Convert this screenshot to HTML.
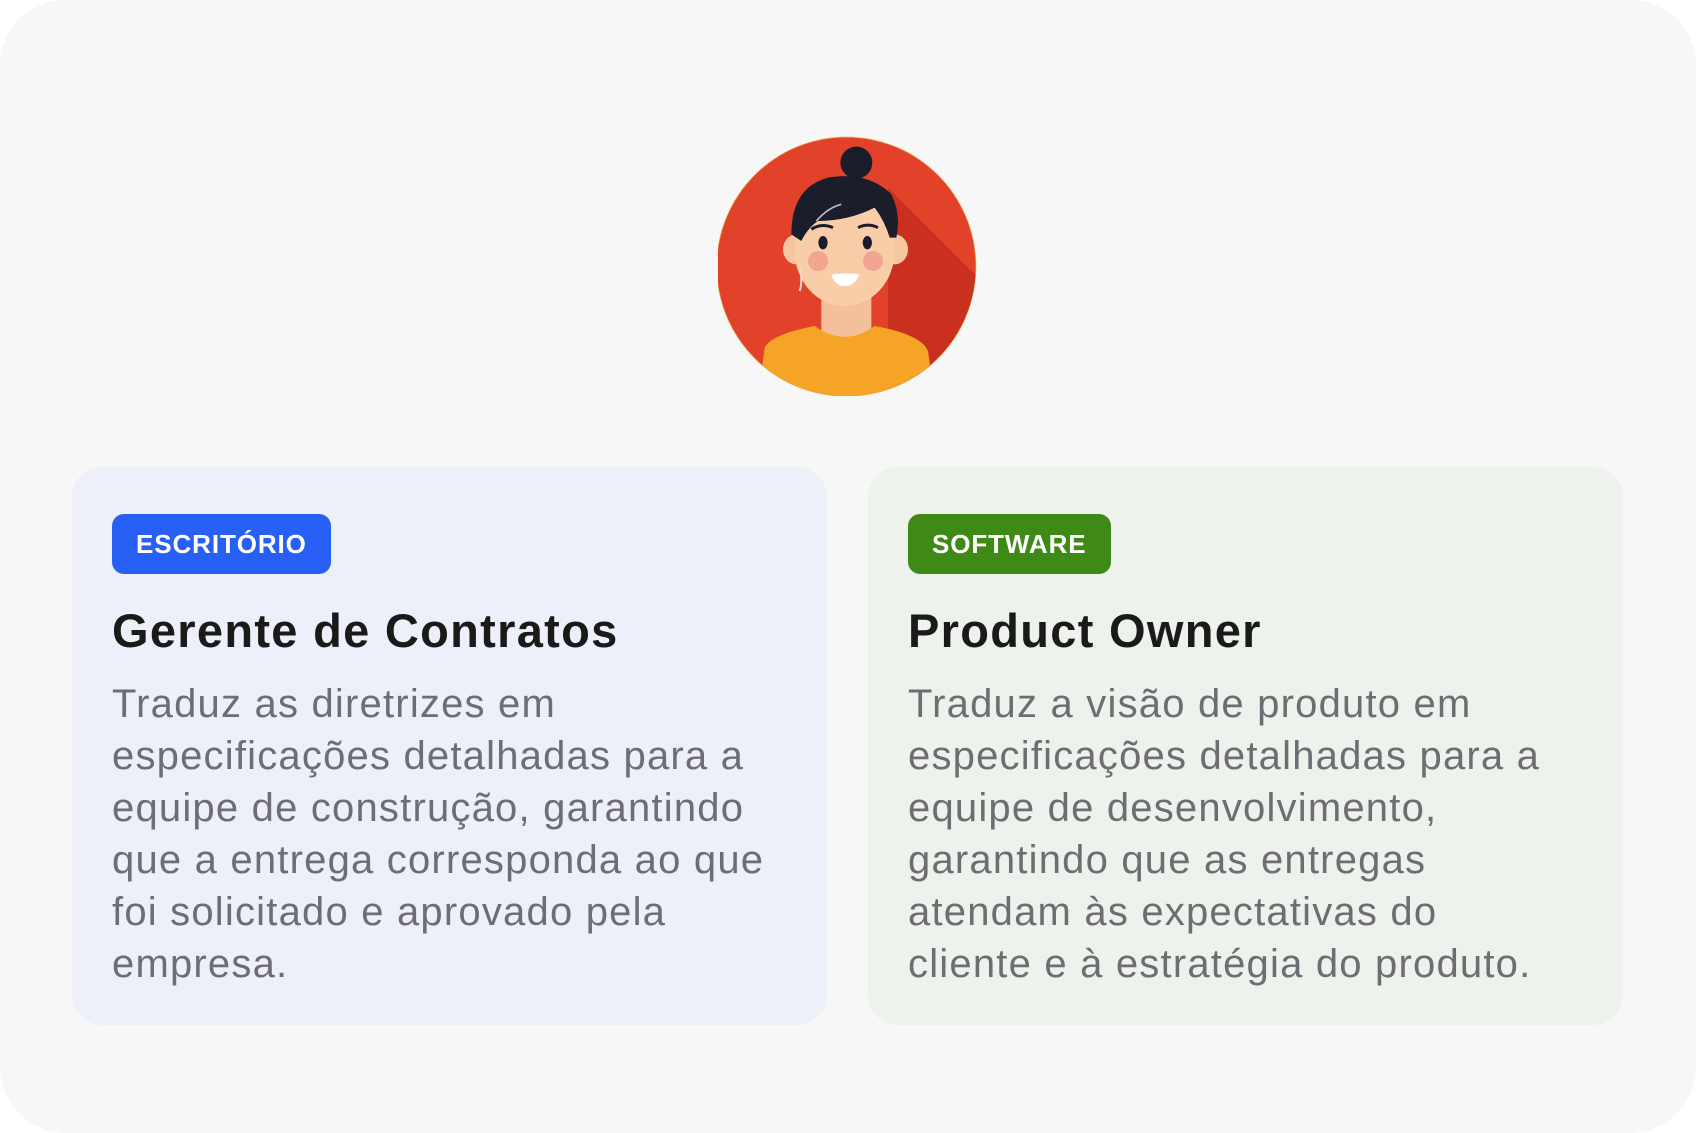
<!DOCTYPE html>
<html><head><meta charset="utf-8"><style>
html,body{margin:0;padding:0;background:#fff;}
body{width:1696px;height:1133px;position:relative;overflow:hidden;font-family:"Liberation Sans",sans-serif;}
.outer{position:absolute;left:0;top:0;width:1696px;height:1133px;background:#f7f7f7;border-radius:66px;}
.card{position:absolute;top:467px;width:755px;height:558px;border-radius:30px;box-sizing:border-box;padding:47px 20px 0 40px;}
.l{left:72px;background:#edf0f9;}
.r{left:868px;background:#eef2ec;}
.badge{display:inline-block;height:60px;line-height:60px;padding:0 24px;border-radius:12px;color:#fff;font-weight:bold;font-size:26px;letter-spacing:0.9px;}
h2{margin:28px 0 0 0;font-size:47px;line-height:58px;color:#1a1a1a;font-weight:bold;letter-spacing:1.3px;white-space:nowrap;}
p{margin:18px 0 0 0;font-size:40px;line-height:52px;color:#6e6e72;letter-spacing:1.2px;white-space:nowrap;}
svg{position:absolute;left:718px;top:136px;}
</style></head><body>
<div class="outer"></div>
<svg width="260" height="260" viewBox="30 45 780 780">
<defs><clipPath id="c"><circle cx="415" cy="437" r="388"/></clipPath></defs>
<circle cx="415" cy="437" r="390" fill="#e8b25a"/>
<g clip-path="url(#c)">
<circle cx="415" cy="437" r="388" fill="#e2412a"/>
<path d="M540 200 L820 480 L820 830 L540 830 Z" fill="#c9301f"/>
<rect x="340" y="470" width="150" height="200" fill="#f3c09a"/>
<path d="M150 830 L170 680 Q190 640 320 615 Q410 680 500 615 Q640 640 660 690 L680 830 Z" fill="#f6a426"/>
<ellipse cx="265" cy="385" rx="40" ry="45" fill="#f5c6a0"/>
<ellipse cx="560" cy="385" rx="40" ry="45" fill="#f5c6a0"/>
<ellipse cx="410" cy="390" rx="150" ry="165" fill="#f8cda8"/>
<path d="M250 340 Q250 200 360 170 Q480 150 550 220 Q580 280 565 350 L545 350 Q530 300 500 260 Q420 300 330 300 Q300 320 280 360 Z" fill="#1b1d2b"/>
<circle cx="445" cy="125" r="48" fill="#1b1d2b"/>
<path d="M325 300 Q360 260 400 250" stroke="#fff" stroke-width="5" fill="none" opacity=".7"/>
<path d="M310 325 Q340 305 375 320" stroke="#1b1d2b" stroke-width="9" fill="none"/>
<path d="M450 320 Q480 305 510 320" stroke="#1b1d2b" stroke-width="9" fill="none"/>
<ellipse cx="345" cy="365" rx="14" ry="20" fill="#1b1d2b"/>
<ellipse cx="478" cy="365" rx="14" ry="20" fill="#1b1d2b"/>
<circle cx="330" cy="420" r="30" fill="#ef8a80" opacity=".6"/>
<circle cx="495" cy="420" r="30" fill="#ef8a80" opacity=".6"/>
<path d="M370 460 Q415 455 455 460 Q440 495 410 495 Q380 495 370 460 Z" fill="#fff"/>
<path d="M275 440 Q285 480 275 510" stroke="#f7d8c8" stroke-width="6" fill="none"/>
</g>
</svg>
<div class="card l"><span class="badge" style="background:#2860f5">ESCRITÓRIO</span><h2>Gerente de Contratos</h2><p>Traduz as diretrizes em<br>especificações detalhadas para a<br>equipe de construção, garantindo<br>que a entrega corresponda ao que<br>foi solicitado e aprovado pela<br>empresa.</p></div>
<div class="card r"><span class="badge" style="background:#3f8a17">SOFTWARE</span><h2>Product Owner</h2><p>Traduz a visão de produto em<br>especificações detalhadas para a<br>equipe de desenvolvimento,<br>garantindo que as entregas<br>atendam às expectativas do<br>cliente e à estratégia do produto.</p></div>
</body></html>
